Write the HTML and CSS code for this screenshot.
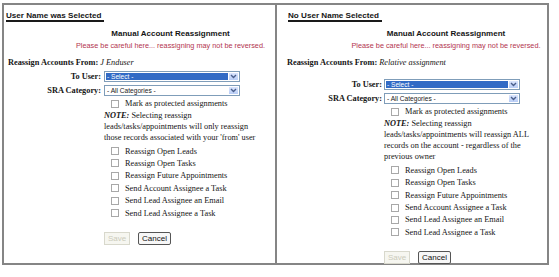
FILE: index.html
```html
<!DOCTYPE html>
<html lang="en">
<head>
    <meta charset="UTF-8">
    <meta name="viewport" content="width=device-width, initial-scale=1.0">
    <title>Manual Account Reassignment</title>
    <link rel="stylesheet" href="styles.css">
</head>
<body>
    <div class="panels">
        <!-- Case 1: a user was picked -->
        <div class="panel panel-left">
            <h2 class="heading">User Name was Selected</h2>
            <div class="title">Manual Account Reassignment</div>
            <div class="warning">Please be careful here... reassigning may not be reversed.</div>
            <div class="from"><b>Reassign Accounts From:</b> <i>J Enduser</i></div>
            <div class="row row-first">
                <span class="label">To User:</span>
                <div class="select select-active">
                    <span class="select-value">- Select -</span>
                    <span class="select-arrow"><svg width="7" height="5" viewBox="0 0 7 5"><path d="M1 1 L3.5 3.5 L6 1" fill="none" stroke="#4a5f8c" stroke-width="1.4"/></svg></span>
                </div>
            </div>
            <div class="row">
                <span class="label">SRA Category:</span>
                <div class="select">
                    <span class="select-value">- All Categories -</span>
                    <span class="select-arrow"><svg width="7" height="5" viewBox="0 0 7 5"><path d="M1 1 L3.5 3.5 L6 1" fill="none" stroke="#4a5f8c" stroke-width="1.4"/></svg></span>
                </div>
            </div>
            <div class="options">
                <label class="check check-first"><span class="box"></span>Mark as protected assignments</label>
                <p class="note"><b><i>NOTE:</i></b> Selecting reassign leads/tasks/appointments will only reassign those records associated with your 'from' user</p>
                <div class="checks">
                    <label class="check"><span class="box"></span>Reassign Open Leads</label>
                    <label class="check"><span class="box"></span>Reassign Open Tasks</label>
                    <label class="check"><span class="box"></span>Reassign Future Appointments</label>
                    <label class="check"><span class="box"></span>Send Account Assignee a Task</label>
                    <label class="check"><span class="box"></span>Send Lead Assignee an Email</label>
                    <label class="check"><span class="box"></span>Send Lead Assignee a Task</label>
                </div>
                <div class="actions">
                    <button class="btn btn-save" disabled>Save</button>
                    <button class="btn btn-cancel">Cancel</button>
                </div>
            </div>
        </div>

        <!-- Case 2: no user picked -->
        <div class="panel panel-right">
            <h2 class="heading">No User Name Selected</h2>
            <div class="title">Manual Account Reassignment</div>
            <div class="warning">Please be careful here... reassigning may not be reversed.</div>
            <div class="from"><b>Reassign Accounts From:</b> <i>Relative assignment</i></div>
            <div class="row row-first">
                <span class="label">To User:</span>
                <div class="select select-active">
                    <span class="select-value">- Select -</span>
                    <span class="select-arrow"><svg width="7" height="5" viewBox="0 0 7 5"><path d="M1 1 L3.5 3.5 L6 1" fill="none" stroke="#4a5f8c" stroke-width="1.4"/></svg></span>
                </div>
            </div>
            <div class="row">
                <span class="label">SRA Category:</span>
                <div class="select">
                    <span class="select-value">- All Categories -</span>
                    <span class="select-arrow"><svg width="7" height="5" viewBox="0 0 7 5"><path d="M1 1 L3.5 3.5 L6 1" fill="none" stroke="#4a5f8c" stroke-width="1.4"/></svg></span>
                </div>
            </div>
            <div class="options">
                <label class="check check-first"><span class="box"></span>Mark as protected assignments</label>
                <p class="note"><b><i>NOTE:</i></b> Selecting reassign leads/tasks/appointments will reassign ALL records on the account - regardless of the previous owner</p>
                <div class="checks">
                    <label class="check"><span class="box"></span>Reassign Open Leads</label>
                    <label class="check"><span class="box"></span>Reassign Open Tasks</label>
                    <label class="check"><span class="box"></span>Reassign Future Appointments</label>
                    <label class="check"><span class="box"></span>Send Account Assignee a Task</label>
                    <label class="check"><span class="box"></span>Send Lead Assignee an Email</label>
                    <label class="check"><span class="box"></span>Send Lead Assignee a Task</label>
                </div>
                <div class="actions">
                    <button class="btn btn-save" disabled>Save</button>
                    <button class="btn btn-cancel">Cancel</button>
                </div>
            </div>
        </div>
    </div>
</body>
</html>
```

FILE: styles.css
```css
/* General styles */
* {
    margin: 0;
    padding: 0;
    box-sizing: border-box;
}

body {
    font-family: "Liberation Serif", "Times New Roman", serif;
    font-size: 8.3px;
    color: #151515;
    background-color: #fff;
}

/* Two side by side boxes */
.panels {
    display: flex;
    width: 547px;
    height: 262px;
    margin: 3px 0 0 2px;
    border: 2px solid #858585;
}

.panel {
    padding-left: 4px;
}

.panel-left {
    width: 273px;
    border-right: 2px solid #858585;
}

.panel-right {
    flex: 1;
    padding-left: 10px;
}

.heading {
    width: fit-content;
    margin: 6px 0 0 -2px;
    padding-right: 3px;
    font: bold 8.1px/9px "Liberation Sans", Arial, sans-serif;
    border-bottom: 2px solid #1a1a1a;
}

.panel-right .heading {
    margin-left: 1px;
}

.title {
    margin: 6px 0 0 58px;
    text-align: center;
    font: bold 8px/12px "Liberation Sans", Arial, sans-serif;
}

.warning {
    margin-left: 58px;
    text-align: center;
    font: 7.3px/12px "Liberation Sans", Arial, sans-serif;
    color: #b3354f;
}

.from {
    margin-top: 5px;
    line-height: 12px;
}

/* Label + dropdown rows */
.row {
    display: flex;
    align-items: center;
    gap: 3px;
    height: 11px;
    margin-top: 3px;
}

.row-first {
    margin-top: 2px;
}

.panel-right .row {
    gap: 2px;
}

.panel-right .row-first {
    margin-top: 10px;
}

.label {
    width: 93px;
    text-align: right;
    font-weight: bold;
    line-height: 11px;
}

.panel-right .label {
    width: 95px;
}

.select {
    display: flex;
    width: 136px;
    height: 11px;
    padding: 1px;
    border: 1px solid #7f9db9;
    background-color: #fff;
}

.select-value {
    flex: 1;
    padding-left: 1px;
    font: 6.6px/7px "Liberation Sans", Arial, sans-serif;
    color: #222;
}

.select-active .select-value {
    background-color: #316ac5;
    color: #fff;
}

.select-arrow {
    display: flex;
    align-items: center;
    justify-content: center;
    width: 9px;
    margin-left: 1px;
    background: linear-gradient(#dae5fd, #b9cdf6);
}

/* Checkboxes and note */
.options {
    margin-left: 96px;
}

.panel-right .options {
    margin-left: 97px;
}

.check {
    display: flex;
    align-items: center;
    height: 12.4px;
}

.check-first {
    height: 11.5px;
    margin-top: 2px;
}

.box {
    width: 8px;
    height: 8px;
    margin: 0 6px 0 7px;
    border: 1px solid #a8a8a8;
    background-color: #fff;
}

.note {
    width: 158px;
    line-height: 11.3px;
}

.checks {
    margin-top: 1.5px;
}

.actions {
    display: flex;
    gap: 8px;
    margin-top: 12.5px;
}

.btn {
    height: 13px;
    font: 8px/11px "Liberation Sans", Arial, sans-serif;
    border: 1px solid;
}

.btn-save {
    width: 26px;
    color: #cbcbbb;
    border-color: #d8d8cc;
    background-color: #f6f6f0;
}

.btn-cancel {
    width: 33px;
    color: #111;
    border-color: #555;
    border-radius: 2px;
    background-color: #f7f7f7;
}
```
